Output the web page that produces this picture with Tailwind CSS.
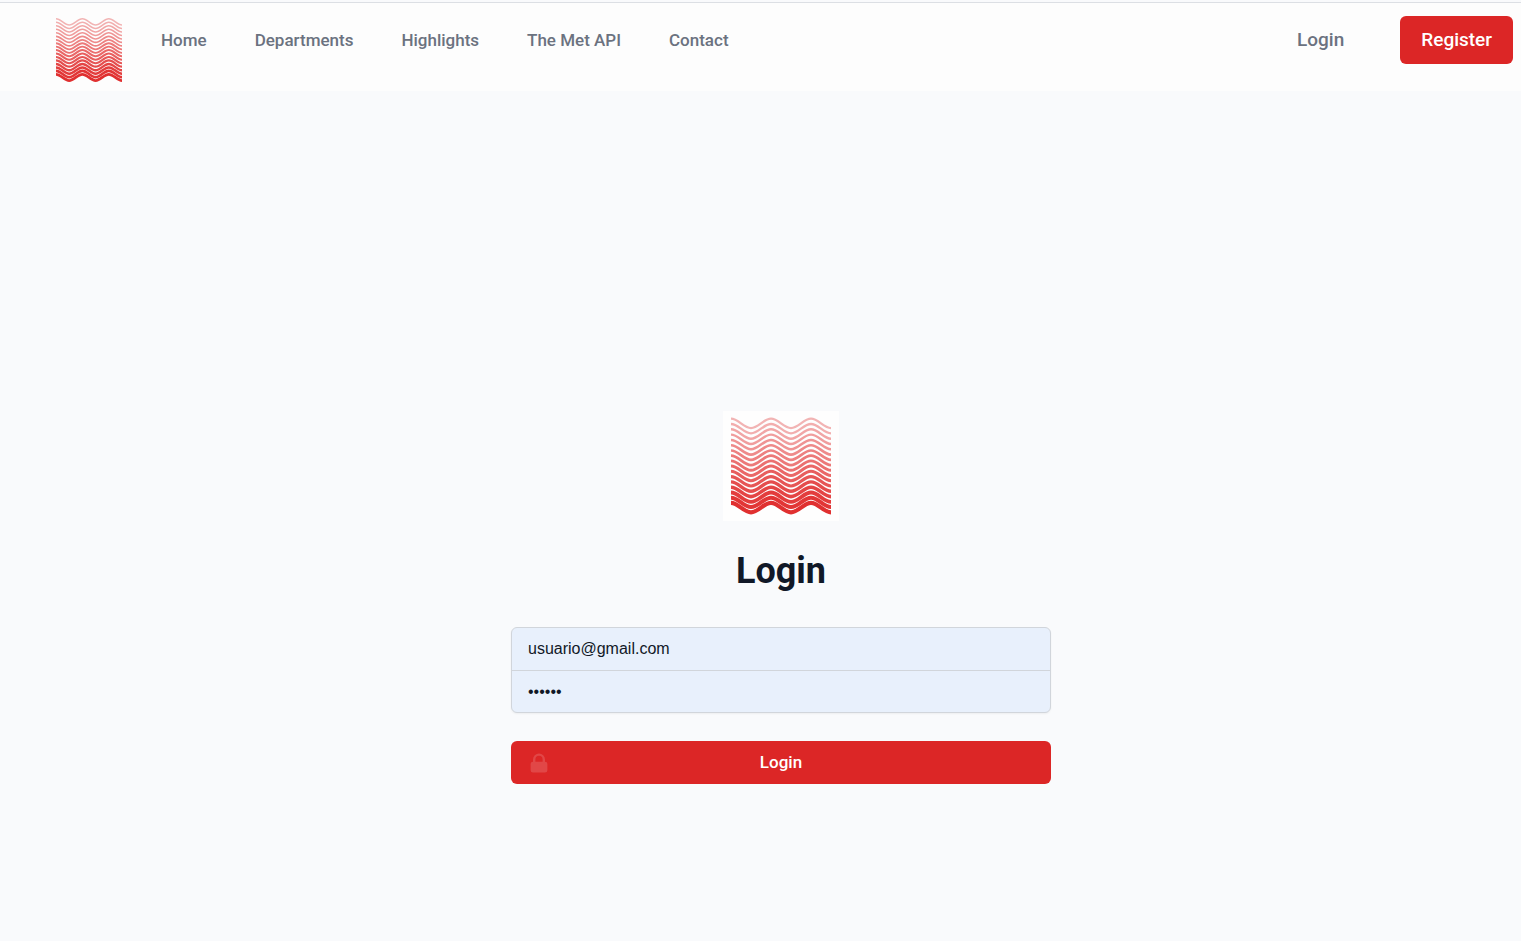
<!DOCTYPE html>
<html lang="en">
<head>
<meta charset="utf-8">
<meta name="viewport" content="width=device-width, initial-scale=1">
<title>Login</title>
<script src="https://cdn.jsdelivr.net/npm/@tailwindcss/browser@4"></script>
</head>
<body class="flex min-h-screen flex-col bg-[#f9fafc] font-['Roboto',sans-serif] text-[#111827]">
<svg class="hidden" aria-hidden="true">
  <defs>
    <path id="wave" d="M0 0C7.3 0 12.7 9.4 20 9.4S32.7 0 40 0S52.7 9.4 60 9.4S72.7 0 80 0S92.7 9.4 100 9.4"/>
    <symbol id="logo" viewBox="0 0 100 97">
      <g fill="none">
        <use href="#wave" y="1.2" stroke="#f2b4b4" stroke-width="2.3"/>
        <use href="#wave" y="6.5" stroke="#f2aeae" stroke-width="2.3"/>
        <use href="#wave" y="11.8" stroke="#f1a6a6" stroke-width="2.4"/>
        <use href="#wave" y="17.1" stroke="#f09d9d" stroke-width="2.4"/>
        <use href="#wave" y="22.4" stroke="#ef9494" stroke-width="2.5"/>
        <use href="#wave" y="27.7" stroke="#ee8a8a" stroke-width="2.6"/>
        <use href="#wave" y="33" stroke="#ed8181" stroke-width="2.7"/>
        <use href="#wave" y="38.2" stroke="#ec7979" stroke-width="2.8"/>
        <use href="#wave" y="43.4" stroke="#eb7070" stroke-width="2.9"/>
        <use href="#wave" y="48.6" stroke="#ea6767" stroke-width="3"/>
        <use href="#wave" y="53.8" stroke="#e85e5e" stroke-width="3.1"/>
        <use href="#wave" y="59.1" stroke="#e65656" stroke-width="3.2"/>
        <use href="#wave" y="64.4" stroke="#e54d4d" stroke-width="3.4"/>
        <use href="#wave" y="69.7" stroke="#e44545" stroke-width="3.6"/>
        <use href="#wave" y="75" stroke="#e33d3d" stroke-width="3.8"/>
        <use href="#wave" y="80.2" stroke="#e23636" stroke-width="4"/>
        <use href="#wave" y="85.4" stroke="#e03030" stroke-width="4.2"/>
      </g>
    </symbol>
  </defs>
</svg>
<header class="mt-0.5 flex items-start border-t border-[#dcdfe4] bg-[#fdfdfd] pt-3 pr-2 pb-2 pl-14">
  <a href="#" aria-label="Home page" class="mt-0.5"><svg class="h-[66px] w-[66px]"><use href="#logo"/></svg></a>
  <nav class="ml-[39px] flex gap-12 pt-[13px] text-[17px] leading-6 font-medium text-[#6b7280]">
    <a href="#">Home</a>
    <a href="#">Departments</a>
    <a href="#">Highlights</a>
    <a href="#">The Met API</a>
    <a href="#">Contact</a>
  </nav>
  <div class="mt-px ml-auto flex items-center gap-14 text-[19px] font-medium">
    <a href="#" class="text-[#6b7280]">Login</a>
    <a href="#" class="flex h-12 items-center rounded-md bg-[#dc2626] px-[21px] text-white">Register</a>
  </div>
</header>
<main class="flex flex-1 flex-col items-center pt-80 pl-[41px]">
  <form class="flex w-full max-w-[540px] flex-col items-center">
    <div class="bg-[#fefefe] px-2 py-1.5"><svg class="h-[98px] w-[100px]"><use href="#logo"/></svg></div>
    <h1 class="mt-7 text-4xl leading-11 font-bold">Login</h1>
    <div class="mt-[34px] flex w-full flex-col divide-y divide-[#d1d5db] overflow-hidden rounded-md border border-[#d1d5db] bg-[#e8f0fc] shadow-xs">
      <input type="email" aria-label="Email address" value="usuario@gmail.com" class="h-[43px] px-4 font-['Liberation_Sans',sans-serif] text-base outline-none">
      <input type="password" aria-label="Password" value="secret" class="h-[41px] px-4 font-['Liberation_Sans',sans-serif] text-base outline-none">
    </div>
    <button type="submit" class="mt-7 grid h-[43px] w-full grid-cols-3 items-center rounded-md bg-[#dc2626] px-4 text-[17px] font-medium text-white">
      <svg class="h-6 w-6 text-[#e14747]" viewBox="0 0 20 20" fill="currentColor" aria-hidden="true"><path fill-rule="evenodd" d="M5 9V7a5 5 0 0110 0v2a2 2 0 012 2v5a2 2 0 01-2 2H5a2 2 0 01-2-2v-5a2 2 0 012-2zm8-2v2H7V7a3 3 0 016 0z" clip-rule="evenodd"/></svg>
      <span>Login</span>
    </button>
  </form>
</main>
</body>
</html>
